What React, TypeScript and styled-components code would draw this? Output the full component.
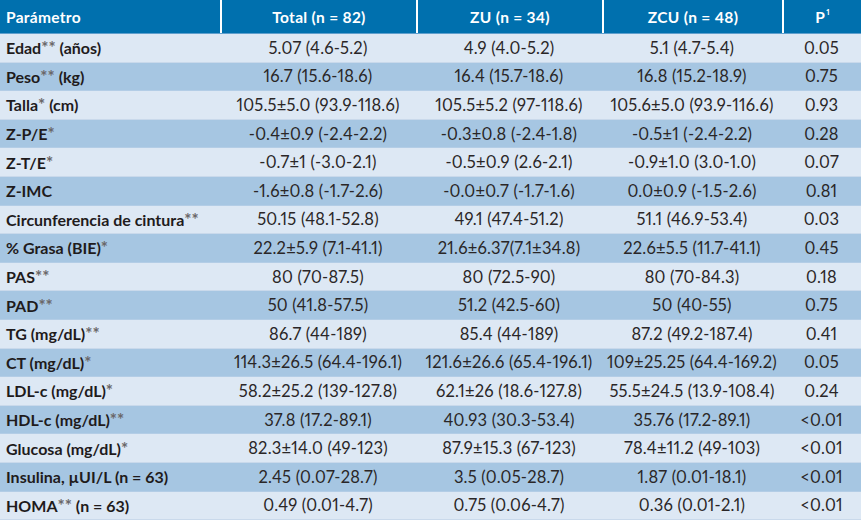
import React from 'react';
import styled, { createGlobalStyle } from 'styled-components';

const GlobalStyle = createGlobalStyle`
  html, body {
    margin: 0;
    padding: 0;
    background: #ffffff;
  }
  body {
    font-family: Lato, 'Noto Sans', sans-serif;
    font-variant-numeric: proportional-nums;
  }
`;

const COLUMNS = '220px 196px 186px 180px 79px';

const Table = styled.div`
  display: flex;
  flex-direction: column;
  width: 861px;
  height: 520px;
  overflow: hidden;
`;

const HeadRow = styled.div`
  display: grid;
  grid-template-columns: ${COLUMNS};
  flex: 0 0 33px;
  background: #0070ae;
  border-bottom: 1px solid #5f9fcd;
`;

const HeadCell = styled.div<{ $first?: boolean }>`
  display: flex;
  align-items: center;
  justify-content: ${({ $first }) => ($first ? 'flex-start' : 'center')};
  padding-left: ${({ $first }) => ($first ? '6px' : '0')};
  border-left: ${({ $first }) => ($first ? 'none' : '2px solid #ffffff')};
  color: #ffffff;
  font-size: 15.5px;
  font-weight: 700;
  letter-spacing: 0.3px;
  white-space: nowrap;
`;

const Sup = styled.sup`
  font-size: 8px;
  line-height: 0;
  margin-left: 1px;
  position: relative;
  top: -1px;
`;

const BodyRow = styled.div<{ $dark: boolean }>`
  display: grid;
  grid-template-columns: ${COLUMNS};
  flex: 1 1 0;
  background: ${({ $dark }) => ($dark ? '#a6c6e2' : '#dde8f4')};
  border-bottom: 1px solid ${({ $dark }) => ($dark ? '#b3cde6' : '#c9d9eb')};
`;

const Label = styled.div`
  display: flex;
  align-items: center;
  padding-left: 6px;
  color: #1f1b1c;
  font-size: 16px;
  font-weight: 700;
  white-space: nowrap;
`;

const Value = styled.div`
  display: flex;
  align-items: center;
  justify-content: center;
  color: #2a2627;
  font-size: 16.5px;
  letter-spacing: 0.2px;
  white-space: nowrap;
`;

const Star = styled.span`
  color: #6a6768;
  font-size: 17px;
`;

type Row = [string, string, string, string, string];

const rows: Row[] = [
  ['Edad** (años)', '5.07 (4.6-5.2)', '4.9 (4.0-5.2)', '5.1 (4.7-5.4)', '0.05'],
  ['Peso** (kg)', '16.7 (15.6-18.6)', '16.4 (15.7-18.6)', '16.8 (15.2-18.9)', '0.75'],
  ['Talla* (cm)', '105.5±5.0 (93.9-118.6)', '105.5±5.2 (97-118.6)', '105.6±5.0 (93.9-116.6)', '0.93'],
  ['Z-P/E*', '-0.4±0.9 (-2.4-2.2)', '-0.3±0.8 (-2.4-1.8)', '-0.5±1 (-2.4-2.2)', '0.28'],
  ['Z-T/E*', '-0.7±1 (-3.0-2.1)', '-0.5±0.9 (2.6-2.1)', '-0.9±1.0 (3.0-1.0)', '0.07'],
  ['Z-IMC', '-1.6±0.8 (-1.7-2.6)', '-0.0±0.7 (-1.7-1.6)', '0.0±0.9 (-1.5-2.6)', '0.81'],
  ['Circunferencia de cintura**', '50.15 (48.1-52.8)', '49.1 (47.4-51.2)', '51.1 (46.9-53.4)', '0.03'],
  ['% Grasa (BIE)*', '22.2±5.9 (7.1-41.1)', '21.6±6.37(7.1±34.8)', '22.6±5.5 (11.7-41.1)', '0.45'],
  ['PAS**', '80 (70-87.5)', '80 (72.5-90)', '80 (70-84.3)', '0.18'],
  ['PAD**', '50 (41.8-57.5)', '51.2 (42.5-60)', '50 (40-55)', '0.75'],
  ['TG (mg/dL)**', '86.7 (44-189)', '85.4 (44-189)', '87.2 (49.2-187.4)', '0.41'],
  ['CT (mg/dL)*', '114.3±26.5 (64.4-196.1)', '121.6±26.6 (65.4-196.1)', '109±25.25 (64.4-169.2)', '0.05'],
  ['LDL-c (mg/dL)*', '58.2±25.2 (139-127.8)', '62.1±26 (18.6-127.8)', '55.5±24.5 (13.9-108.4)', '0.24'],
  ['HDL-c (mg/dL)**', '37.8 (17.2-89.1)', '40.93 (30.3-53.4)', '35.76 (17.2-89.1)', '<0.01'],
  ['Glucosa (mg/dL)*', '82.3±14.0 (49-123)', '87.9±15.3 (67-123)', '78.4±11.2 (49-103)', '<0.01'],
  ['Insulina, µUI/L (n = 63)', '2.45 (0.07-28.7)', '3.5 (0.05-28.7)', '1.87 (0.01-18.1)', '<0.01'],
  ['HOMA** (n = 63)', '0.49 (0.01-4.7)', '0.75 (0.06-4.7)', '0.36 (0.01-2.1)', '<0.01'],
];

// asterisks are printed grey, unlike the rest of the bold label
const renderLabel = (text: string) =>
  text.split(/(\*+)/).map((part, i) =>
    part.startsWith('*') ? <Star key={i}>{part}</Star> : <React.Fragment key={i}>{part}</React.Fragment>
  );

export default function App() {
  return (
    <>
      <GlobalStyle />
      <Table>
        <HeadRow>
          <HeadCell $first>Parámetro</HeadCell>
          <HeadCell>Total (n = 82)</HeadCell>
          <HeadCell>ZU (n = 34)</HeadCell>
          <HeadCell>ZCU (n = 48)</HeadCell>
          <HeadCell>
            <span>
              P<Sup>1</Sup>
            </span>
          </HeadCell>
        </HeadRow>
        {rows.map(([label, total, zu, zcu, p], i) => (
          <BodyRow key={label} $dark={i % 2 === 1}>
            <Label>
              <span>{renderLabel(label)}</span>
            </Label>
            <Value>{total}</Value>
            <Value>{zu}</Value>
            <Value>{zcu}</Value>
            <Value>{p}</Value>
          </BodyRow>
        ))}
      </Table>
    </>
  );
}
